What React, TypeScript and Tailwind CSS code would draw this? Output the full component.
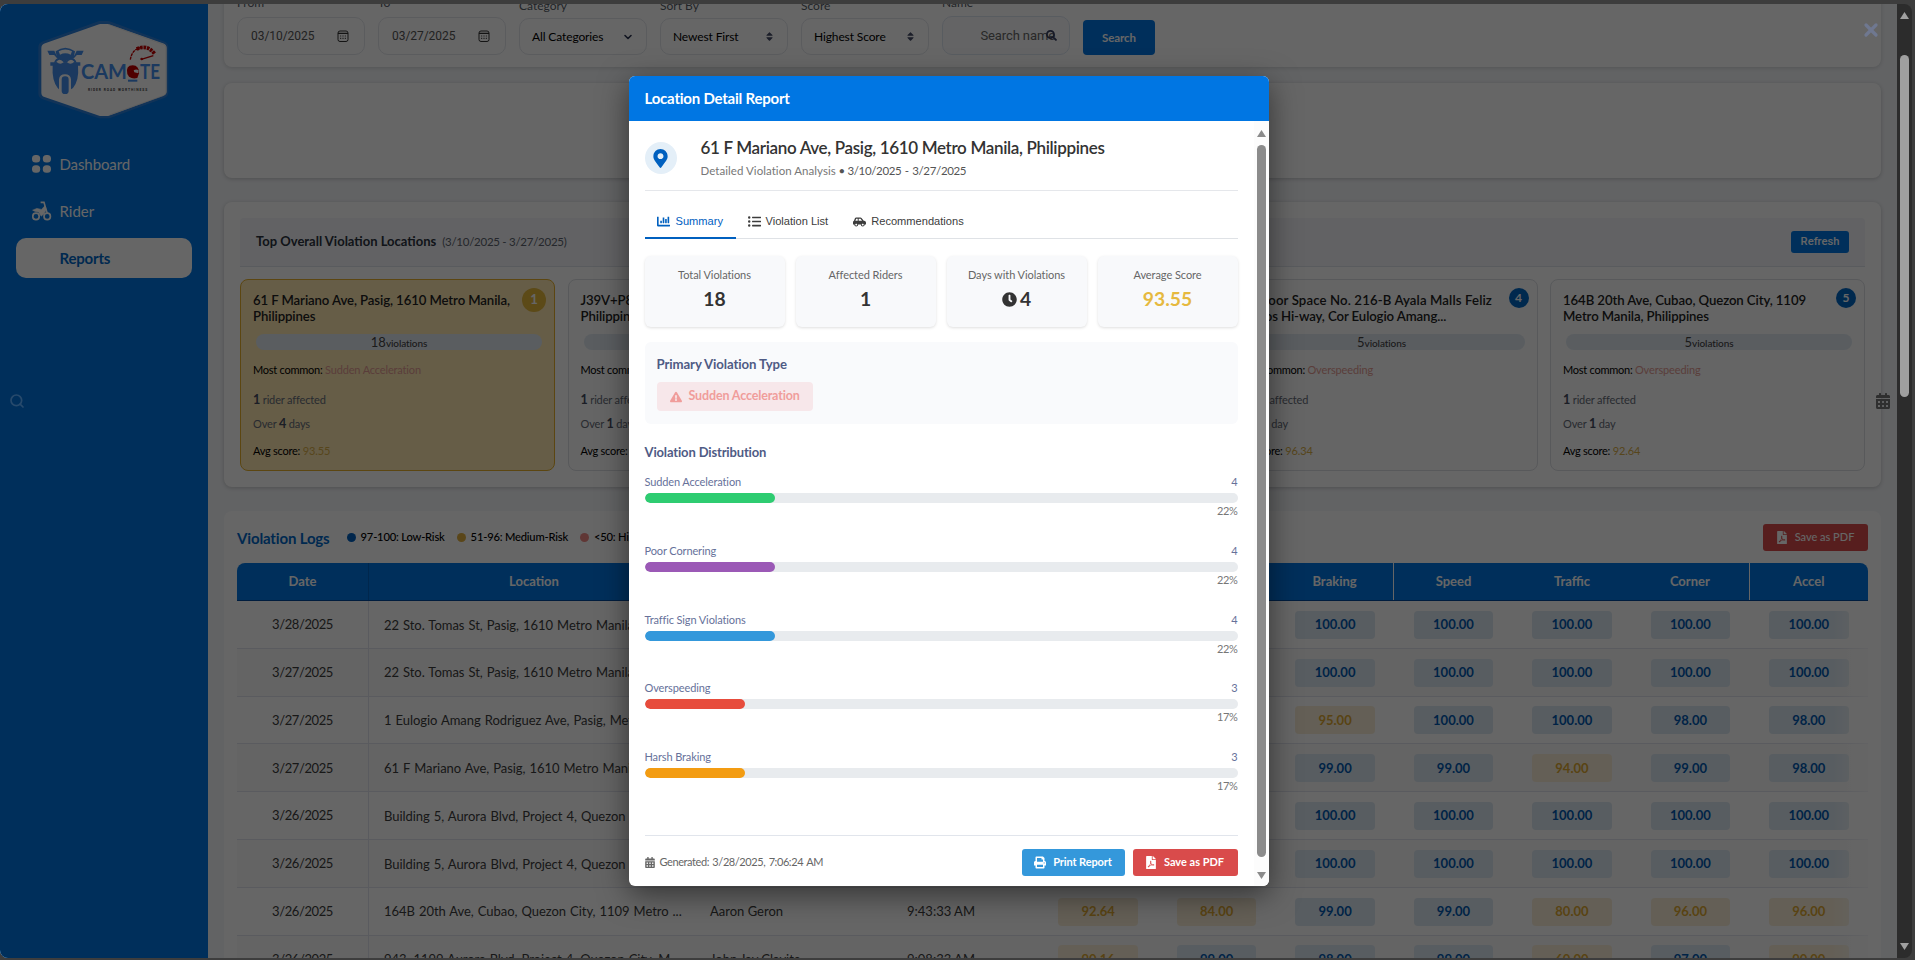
import React from "react";
import {
  FaCalendarAlt,
  FaCarSide,
  FaChartBar,
  FaClock,
  FaExclamationTriangle,
  FaFilePdf,
  FaListUl,
  FaMapMarkerAlt,
  FaPrint,
  FaSearch,
  FaSort,
} from "react-icons/fa";
import { ChevronDown, Search, X } from "lucide-react";

function Logo() {
  return (
    <svg viewBox="0 0 450 360" className="h-[120px] w-[150px]">
      <polygon
        points="44,112 210,52 234,52 396,112 396,246 234,306 210,306 44,250"
        fill="#2c80dc"
        stroke="#2c80dc"
        strokeWidth="38"
        strokeLinejoin="round"
      />
      <polygon
        points="48,114 212,56 232,56 396,114 396,244 232,304 212,304 48,248"
        fill="#fff"
        stroke="#fff"
        strokeWidth="28"
        strokeLinejoin="round"
      />
      <path d="M236 44 L402 104 Q408 106 408 114 V246 Q408 252 402 256 L240 314" fill="none" stroke="#e4e4e4" strokeWidth="2" />
      <g fill="#4490ee">
        <path d="M52 122 h21 l6 13 h-21 z M161 122 h-21 l-6 13 h21 z" />
        <path d="M70 129 l14 15 M143 129 l-14 15" stroke="#4490ee" strokeWidth="5" />
        <path d="M77 124 Q106 102 135 124 L131 144 L106 154 L81 144 Z" />
        <path d="M61 157 h90 v10 h-7 Q148 210 129 234 L123 238 V208 Q121 193 105 193 Q89 193 87 208 V238 L83 234 Q65 210 68 167 h-7 z" />
        <path d="M72 158 Q76 144 88 143 L106 153 L124 143 Q136 144 140 158 Z" />
        <rect x="95" y="199" width="21" height="53" rx="10" />
      </g>
      <path d="M86 124 Q106 113 126 124 L122 134 Q106 126 90 134 Z" fill="#fff" />
      <path d="M79 155 Q90 143 101 157 Q90 166 79 155 Z M133 155 Q122 143 111 157 Q122 166 133 155 Z" fill="#fff" />
      <text x="153" y="208" fontFamily="Lato, sans-serif" fontWeight="700" fontSize="61" textLength="138" lengthAdjust="spacingAndGlyphs" fill="#4490ee">CAM</text>
      <text x="330" y="208" fontFamily="Lato, sans-serif" fontWeight="700" fontSize="61" textLength="60" lengthAdjust="spacingAndGlyphs" fill="#4490ee">TE</text>
      <rect x="294" y="209" width="28" height="6" fill="#4490ee" />
      <path d="M292 192 Q286 166 308 166 Q328 167 327 190 L322 204 Q308 208 297 200 Z" fill="#c60000" />
      <path d="M311 181 Q319 176 326 181 L325 190 L313 187 Z" fill="#fff" />
      <path d="M301 149 Q306 116 337 112" fill="none" stroke="#c60000" strokeWidth="4" strokeDasharray="9 2" />
      <path d="M320 117 Q352 102 374 132" fill="none" stroke="#c60000" strokeWidth="11" strokeDasharray="8 2.5" />
      <path d="M334 148 L370 137" stroke="#c60000" strokeWidth="4" />
      <circle cx="335" cy="147" r="4" fill="#c60000" />
      <text x="174" y="242" fontFamily="Roboto, sans-serif" fontWeight="700" fontSize="10" textLength="178" fill="#444">RIDER ROAD WORTHINESS</text>
    </svg>
  );
}

function DotsIcon() {
  return (
    <svg viewBox="0 0 20 20" className="h-5 w-5" fill="#fff">
      <rect x="0" y="1" width="8.2" height="7.6" rx="3.6" />
      <rect x="10.8" y="1" width="8.2" height="7.6" rx="3.6" />
      <rect x="0" y="11.2" width="8.2" height="7.6" rx="3.6" />
      <rect x="10.8" y="11.2" width="8.2" height="7.6" rx="3.6" />
    </svg>
  );
}

function BikeIcon() {
  return (
    <svg viewBox="0 0 20 20" className="h-5 w-5" fill="none" stroke="#fff">
      <circle cx="4" cy="15.4" r="3.2" strokeWidth="1.7" />
      <circle cx="15.2" cy="15.4" r="3.2" strokeWidth="1.7" />
      <path d="M8.6 1.4h3.4l1.8 6.4 1.6 5" strokeWidth="1.6" />
      <path d="M0.6 9.2 4.8 7.4l4.6 1 3.6-3.6 1.4 3.4-2.2 4.4-3 2.6-2.6-4.2-3.4-.6z" fill="#fff" strokeWidth="0.6" />
    </svg>
  );
}

function DateIcon() {
  return (
    <svg viewBox="0 0 12 12" className="h-3 w-3" fill="none" stroke="#333" strokeWidth="1">
      <rect x="1" y="1" width="10" height="10.5" rx="2" />
      <path d="M1 3.4h10" strokeWidth="1.2" />
      <path d="M3.2 6h1M5.5 6h1M7.8 6h1M3.2 8.4h1M5.5 8.4h1M7.8 8.4h1" strokeWidth="1.1" />
    </svg>
  );
}

function Sidebar() {
  return (
    <aside className="flex w-[208px] shrink-0 flex-col bg-[#0076e3]">
      <div className="mt-[6px] flex justify-center pl-[2px]">
        <Logo />
      </div>
      <nav className="mt-[14px] flex flex-col gap-[7px] px-4 text-[15px] text-white">
        <a className="flex h-10 items-center gap-2 pl-[15.5px] tracking-[-0.1px]"><DotsIcon />Dashboard</a>
        <a className="flex h-10 items-center gap-2 pl-[15.5px]"><BikeIcon />Rider</a>
        <a className="flex h-10 items-center rounded-[10px] bg-white pl-[43.5px] font-bold tracking-[-0.2px] text-[#0068c8]">Reports</a>
      </nav>
    </aside>
  );
}

function Field({ label, children }: { label: string; children: React.ReactNode }) {
  return (
    <div className="flex w-32 flex-col">
      <span className="h-[18px] text-[12px] leading-[18px] text-[#555b66]">{label}</span>
      {children}
    </div>
  );
}

function DateField({ label, value }: { label: string; value: string }) {
  return (
    <Field label={label}>
      <div className="mt-[5px] flex h-[38px] items-center justify-between rounded-[10px] border border-[#e3e6ec] pb-px pl-[13px] pr-[15px] font-['Roboto'] text-[12px] tracking-[-0.05px] text-[#555]">
        {value}
        <DateIcon />
      </div>
    </Field>
  );
}

function SelectField({ label, value, sort }: { label: string; value: string; sort?: boolean }) {
  return (
    <Field label={label}>
      <div className="mt-[3px] flex h-[37px] items-center justify-between rounded-[10px] border border-[#e3e6ec] pl-3 pr-3 text-[12px] tracking-[-0.12px] text-black">
        {value}
        {sort ? <FaSort className="mr-[1px] h-[11px] w-[9px] text-[#444b66]" /> : <ChevronDown className="h-[12px] w-[12px] text-[#2b3350]" strokeWidth={3.2} />}
      </div>
    </Field>
  );
}

function Filters() {
  return (
    <section className="-mt-5 flex h-[83px] items-end gap-[13px] rounded-lg bg-white px-[13px] pb-3 shadow-[0_1px_4px_rgba(0,0,0,0.15)]">
      <DateField label="From" value="03/10/2025" />
      <DateField label="To" value="03/27/2025" />
      <SelectField label="Category" value="All Categories" />
      <SelectField label="Sort By" value="Newest First" sort />
      <SelectField label="Score" value="Highest Score" sort />
      <Field label="Name">
        <div className="mt-[4px] flex h-[39px] items-center justify-end rounded-[10px] border border-[#dde5f0] bg-[#fafbfd] pr-[12px] font-['Roboto'] text-[13px] text-[#666]">
          <span className="-mr-[9px] tracking-[-0.1px]">Search name</span>
          <FaSearch className="h-[11px] w-[11px] text-[#3a4262]" />
        </div>
      </Field>
      <button className="h-[35px] w-[72px] rounded bg-[#0076e3] text-[11.5px] font-bold tracking-[-0.1px] text-white">Search</button>
    </section>
  );
}

type Loc = { title: [string, string]; rank: number; count: number; type: string; days: string; score: string };
const locations: Loc[] = [
  { title: ["61 F Mariano Ave, Pasig, 1610 Metro Manila,", "Philippines"], rank: 1, count: 18, type: "Sudden Acceleration", days: "4 days", score: "93.55" },
  { title: ["J39V+P8F, Pasig, 1610 Metro Manila,", "Philippines"], rank: 2, count: 9, type: "Overspeeding", days: "1 day", score: "95.20" },
  { title: ["22 Sto. Tomas St, Pasig, 1610 Metro", "Manila, Philippines"], rank: 3, count: 6, type: "Overspeeding", days: "1 day", score: "97.10" },
  { title: ["1st Floor Space No. 216-B Ayala Malls Feliz", "Marcos Hi-way, Cor Eulogio Amang..."], rank: 4, count: 5, type: "Overspeeding", days: "1 day", score: "96.34" },
  { title: ["164B 20th Ave, Cubao, Quezon City, 1109", "Metro Manila, Philippines"], rank: 5, count: 5, type: "Overspeeding", days: "1 day", score: "92.64" },
];

function LocationCard({ loc }: { loc: Loc }) {
  const top = loc.rank === 1;
  const [n, unit] = loc.days.split(" ");
  return (
    <article className={`flex h-[192px] flex-col rounded-lg border pl-3 pr-2 pt-2 ${top ? "border-[#e5b02c] bg-[#ffe8b2]" : "border-[#dcdfe4] bg-[#fcfcfc]"}`}>
      <div className="flex h-[46px] justify-between">
        <h3 className="whitespace-nowrap pt-[4px] text-[13.2px] font-semibold leading-4 tracking-[-0.1px] text-[#222]">
          <span className={loc.rank === 4 ? "tracking-[0.12px]" : ""}>{loc.title[0]}</span>
          <br />
          {loc.title[1]}
        </h3>
        {top ? (
          <span className="flex h-6 w-6 shrink-0 items-center justify-center rounded-full bg-[#e5b83b] text-[13px] font-bold text-white">1</span>
        ) : (
          <span className="flex h-5 w-5 shrink-0 items-center justify-center rounded-full bg-[#0066c4] text-[12px] font-bold text-white">{loc.rank}</span>
        )}
      </div>
      <div className="ml-[3px] mr-1 flex h-4 items-baseline justify-center rounded-full bg-[#e0e9f1] leading-4 text-[#444]">
        <span className="text-[13px] leading-4">{loc.count}</span>
        <span className="text-[10px] font-medium leading-4 tracking-[-0.1px]">violations</span>
      </div>
      <p className="mt-[12px] text-[11px] leading-4 tracking-[-0.25px] text-black">
        Most common: <span className="tracking-[-0.15px] text-[#e29a92]">{loc.type}</span>
      </p>
      <p className="mt-[14px] text-[11px] leading-4 tracking-[-0.15px] text-[#666c78]"><b className="text-[12.5px] text-[#444b60]">1</b> rider affected</p>
      <p className="mt-2 text-[11px] leading-4 tracking-[-0.15px] text-[#666c78]">Over <b className="text-[12.5px] text-[#444b60]">{n}</b> {unit}</p>
      <p className="mt-[11px] text-[11px] leading-4 tracking-[-0.25px] text-black">Avg score: <span className="tracking-[-0.1px] text-[#d9ae48]">{loc.score}</span></p>
    </article>
  );
}

function TopLocations() {
  return (
    <section className="mt-6 h-[285px] rounded-lg bg-white p-4 shadow-[0_1px_4px_rgba(0,0,0,0.2)]">
      <header className="flex h-[49px] items-center rounded-t border-b border-[#dfe4ea] bg-[#f4f6f9] pl-4 pr-4">
        <h2 className="text-[13px] font-bold text-[#2c3340]">Top Overall Violation Locations</h2>
        <span className="ml-[6px] text-[11.5px] tracking-[-0.27px] text-[#5c636e]">(3/10/2025 - 3/27/2025)</span>
        <button className="ml-auto h-[22px] w-[58px] rounded-[3px] bg-[#0076e3] font-['Roboto'] text-[11.2px] font-medium text-white">Refresh</button>
      </header>
      <div className="mt-3 grid grid-cols-5 gap-[12.5px]">
        {locations.map((l) => (
          <LocationCard key={l.rank} loc={l} />
        ))}
      </div>
    </section>
  );
}

type Row = [string, string, string, string, string[]];
const all = "100.00";
const rows: Row[] = [
  ["3/28/2025", "22 Sto. Tomas St, Pasig, 1610 Metro Manila...", "Aaron Geron", "6:41:10 AM", [all, all, all, all, all, all, all]],
  ["3/27/2025", "22 Sto. Tomas St, Pasig, 1610 Metro Manila...", "Aaron Geron", "9:12:45 PM", [all, all, all, all, all, all, all]],
  ["3/27/2025", "1 Eulogio Amang Rodriguez Ave, Pasig, Metro ...", "Aaron Geron", "8:50:02 PM", ["98.60", all, "95.00", all, all, "98.00", "98.00"]],
  ["3/27/2025", "61 F Mariano Ave, Pasig, 1610 Metro Manila...", "Aaron Geron", "7:32:51 PM", ["97.80", all, "99.00", "99.00", "94.00", "99.00", "98.00"]],
  ["3/26/2025", "Building 5, Aurora Blvd, Project 4, Quezon City ...", "Aaron Geron", "5:20:18 PM", [all, all, all, all, all, all, all]],
  ["3/26/2025", "Building 5, Aurora Blvd, Project 4, Quezon City ...", "Aaron Geron", "5:02:40 PM", [all, all, all, all, all, all, all]],
  ["3/26/2025", "164B 20th Ave, Cubao, Quezon City, 1109 Metro ...", "Aaron Geron", "9:43:33 AM", ["92.64", "84.00", "99.00", "99.00", "80.00", "96.00", "96.00"]],
  ["3/26/2025", "943, 1199 Aurora Blvd, Project 4, Quezon City, M...", "John Jay Clavite", "9:08:33 AM", ["90.16", "99.00", "98.00", "99.00", "60.00", "97.00", "90.00"]],
];
const heads = ["Date", "Location", "Rider", "Time", "Score", "Overall", "Braking", "Speed", "Traffic", "Corner", "Accel"];
const cols = "grid grid-cols-[132px_330px_144px_196px_repeat(7,minmax(0,1fr))]";

function Pill({ v }: { v: string }) {
  const low = parseFloat(v) >= 97;
  return (
    <span className={`flex h-7 w-[79.5px] items-center justify-center rounded text-[13px] font-bold ${low ? "bg-[#dce8f2] text-[#0058b0]" : "bg-[#f9eed8] text-[#dea830]"}`}>
      {v}
    </span>
  );
}

function Legend({ color, text }: { color: string; text: string }) {
  return (
    <span className="flex items-center gap-[5px] text-[11.2px] font-medium tracking-[-0.2px] text-black">
      <i className={`h-[9px] w-[9px] rounded-full ${color}`} />
      {text}
    </span>
  );
}

function Logs() {
  return (
    <section className="mt-6 h-[500px] rounded-lg bg-white px-[13px] pt-[13px]">
      <div className="flex h-[27px] items-center">
        <h2 className="pt-px text-[15px] font-bold tracking-[-0.15px] text-[#0068c8]">Violation Logs</h2>
        <div className="ml-[17px] flex gap-3">
          <Legend color="bg-[#0060bf]" text="97-100: Low-Risk" />
          <Legend color="bg-[#e0b040]" text="51-96: Medium-Risk" />
          <Legend color="bg-[#ef8a86]" text="<50: High-Risk" />
        </div>
        <button className="ml-auto flex h-[27px] w-[105px] items-center justify-center gap-2 rounded-[3px] bg-[#d94b4b] text-[11px] font-medium text-white">
          <FaFilePdf className="h-[13px] w-[10px]" />
          Save as PDF
        </button>
      </div>
      <div className="relative mt-3 overflow-hidden rounded-t-lg">
        <div className={`${cols} h-[38px] border-b border-[#004a9c] bg-[#0076e3] text-[13px] font-bold text-white`}>
          {heads.map((h, i) => (
            <div key={h} className={`flex items-center justify-center ${i === 0 ? "border-r border-[#0062c0]" : ""} ${i === 6 || i === 9 ? "border-r border-white" : ""}`}>
              {h}
            </div>
          ))}
        </div>
        {rows.map(([d, l, r, t, s], i) => (
          <div key={i} className={`${cols} h-[47.8px] border-b border-[#e1e3ee] text-[13px] text-[#3c3c3c] ${i % 2 ? "bg-[#fafafa]" : "bg-white"}`}>
            <div className="flex items-center justify-center border-r border-[#e1e3ee] pt-px tracking-[-0.4px]">{d}</div>
            <div className="flex items-center whitespace-nowrap pl-[15px] pt-[2px] tracking-[-0.05px] [word-spacing:0.8px]">{l}</div>
            <div className="flex items-center whitespace-nowrap pl-[11px] pt-[2px]">{r}</div>
            <div className="flex items-center justify-center pt-[2px]">{t}</div>
            {s.map((v, j) => (
              <div key={j} className="flex items-center justify-center pt-px">
                <Pill v={v} />
              </div>
            ))}
          </div>
        ))}
        <div className="absolute bottom-0 right-0 top-[38px] w-9 bg-gradient-to-r from-transparent to-white/70" />
      </div>
    </section>
  );
}

function Stat({ label, value, gold, clock }: { label: string; value: string; gold?: boolean; clock?: boolean }) {
  return (
    <div className="flex h-[71px] flex-col items-center rounded-md bg-[#f8f9fb] pt-[11px] shadow-[0_1px_3px_rgba(0,0,0,0.13)]">
      <span className="text-[11px] leading-4 tracking-[-0.06px] text-[#666]">{label}</span>
      <span className={`mt-[4px] flex items-center gap-[3px] text-[19.3px] font-bold leading-6 ${gold ? "text-[#e6b93f]" : "text-[#333]"}`}>
        {clock && <FaClock className="h-[15px] w-[15px]" />}
        {value}
      </span>
    </div>
  );
}

const dist = [
  { name: "Sudden Acceleration", n: 4, pct: 22, color: "bg-[#2ecc71]" },
  { name: "Poor Cornering", n: 4, pct: 22, color: "bg-[#9b59b6]" },
  { name: "Traffic Sign Violations", n: 4, pct: 22, color: "bg-[#3498db]" },
  { name: "Overspeeding", n: 3, pct: 17, color: "bg-[#e74c3c]" },
  { name: "Harsh Braking", n: 3, pct: 17, color: "bg-[#f39c12]" },
];

function Modal() {
  return (
    <div className="flex h-[810px] w-[640px] flex-col overflow-hidden rounded-md bg-white shadow-[0_8px_30px_rgba(0,0,0,0.5)]">
      <header className="flex h-[45px] shrink-0 items-center bg-[#0076e3] px-4 text-[15px] font-bold tracking-[-0.22px] text-white">Location Detail Report</header>
      <div className="flex min-h-0 flex-1">
        <div className="flex w-[625px] flex-col pl-4 pr-4">
          <div className="flex h-[70px] shrink-0 border-b border-[#e5e7eb]">
            <span className="mt-[21px] flex h-8 w-8 items-center justify-center rounded-full bg-[#e4eff8]">
              <FaMapMarkerAlt className="h-[19px] w-[15px] text-[#0060bf]" />
            </span>
            <div className="ml-6 mt-4 whitespace-nowrap">
              <h2 className="text-[17px] font-semibold leading-[22px] tracking-[-0.34px] text-[#333]">61 F Mariano Ave, Pasig, 1610 Metro Manila, Philippines</h2>
              <p className="mt-[4px] text-[11.5px] leading-4 tracking-[-0.34px] text-[#555]">
                <span className="tracking-[0.05px] text-[#777]">Detailed Violation Analysis</span> • <span className="[word-spacing:0.8px]">3/10/2025 - 3/27/2025</span>
              </p>
            </div>
          </div>
          <div className="mt-3 flex h-[36px] shrink-0 items-stretch border-b border-[#dfe2e6] font-['Liberation_Sans',sans-serif] text-[11.1px] text-[#3c3c3c]">
            <button className="-mb-px flex w-[91px] items-center gap-[6px] border-b-2 border-[#0060bf] pl-3 pt-[3px] text-[#0060bf]">
              <FaChartBar className="h-[13px] w-[13px]" />
              Summary
            </button>
            <button className="flex items-center gap-[5px] pl-3 pt-[2px]">
              <FaListUl className="h-[13px] w-[13px]" />
              Violation List
            </button>
            <button className="ml-[13px] flex items-center gap-[5px] pl-3 pt-[2px]">
              <FaCarSide className="h-[12px] w-[13px]" />
              Recommendations
            </button>
          </div>
          <div className="mt-[17px] grid shrink-0 grid-cols-4 gap-[11px]">
            <Stat label="Total Violations" value="18" />
            <Stat label="Affected Riders" value="1" />
            <Stat label="Days with Violations" value="4" clock />
            <Stat label="Average Score" value="93.55" gold />
          </div>
          <div className="mt-[15px] flex h-[82px] shrink-0 flex-col items-start rounded-md bg-[#f9fafc] px-3 pt-3">
            <h3 className="text-[13.2px] font-bold leading-5 tracking-[-0.1px] text-[#4f5b85]">Primary Violation Type</h3>
            <span className="mt-[8px] flex h-[29px] w-[156px] items-center gap-[7px] rounded bg-[#f7e7ea] pl-[13px] text-[12.5px] font-bold tracking-[-0.15px] text-[#f09d9b]">
              <FaExclamationTriangle className="h-[12px] w-[12px]" />
              Sudden Acceleration
            </span>
          </div>
          <h3 className="mt-[18px] text-[13px] font-bold leading-5 tracking-[-0.15px] text-[#4f5b85]">Violation Distribution</h3>
          <div className="mt-3 flex flex-col">
            {dist.map((d) => (
              <div key={d.name} className="flex h-[68.75px] flex-col">
                <div className="flex justify-between text-[11px] leading-4 tracking-[-0.12px] text-[#66719a]">
                  <span>{d.name}</span>
                  <span>{d.n}</span>
                </div>
                <div className="mt-[3px] h-[10px] shrink-0 overflow-hidden rounded-full bg-[#e8ebee]">
                  <div className={`h-full rounded-full ${d.color}`} style={{ width: `${d.pct}%` }} />
                </div>
                <span className="text-right text-[11px] leading-4 tracking-[-0.4px] text-[#777]">{d.pct}%</span>
              </div>
            ))}
          </div>
          <footer className="mt-[17px] flex shrink-0 items-start border-t border-[#e1e5ec] pt-[13px]">
            <span className="flex h-[27px] items-center gap-[5px] text-[11px] tracking-[-0.42px] text-[#666] [word-spacing:1px]">
              <FaCalendarAlt className="h-[11px] w-[10px]" />
              Generated: 3/28/2025, 7:06:24 AM
            </span>
            <button className="ml-auto flex h-[27px] w-[103px] items-center justify-center gap-[7px] rounded-[3px] bg-[#3498db] text-[11px] font-bold tracking-[-0.1px] text-white">
              <FaPrint className="h-[13px] w-[12px]" />
              Print Report
            </button>
            <button className="ml-2 flex h-[27px] w-[105px] items-center justify-center gap-2 rounded-[3px] bg-[#d94b4b] text-[11px] font-bold text-white">
              <FaFilePdf className="h-[13px] w-[10px]" />
              Save as PDF
            </button>
          </footer>
        </div>
        <div className="flex w-[15px] flex-col items-center bg-[#fcfcfc] pb-[7px] pt-[9px]">
          <svg viewBox="0 0 9 7" className="h-[7px] w-[9px] shrink-0" fill="#8b8b8b"><path d="M4.5 0 9 7H0z" /></svg>
          <div className="mt-2 h-[712px] w-[9px] shrink-0 rounded-full bg-[#8b8b8b]" />
          <svg viewBox="0 0 9 7" className="mt-auto h-[7px] w-[9px] shrink-0" fill="#8b8b8b"><path d="M4.5 7 9 0H0z" /></svg>
        </div>
      </div>
    </div>
  );
}

export default function App() {
  return (
    <div className="flex h-[960px] w-[1915px] overflow-hidden bg-[#3d3d3d] pb-[2px] pt-1 font-['Lato',sans-serif]">
      <div className="relative flex w-[1897px] shrink-0 overflow-hidden rounded-l-lg bg-[#f5f7fa]">
        <Sidebar />
        <main className="min-w-0 flex-1 overflow-hidden px-4">
          <Filters />
          <section className="mt-4 h-[95px] rounded-lg bg-white shadow-[0_1px_4px_rgba(0,0,0,0.2)]" />
          <TopLocations />
          <Logs />
        </main>
        <FaCalendarAlt className="absolute left-[1876px] top-[389px] h-4 w-[14px] text-[#777]" />
        <div className="absolute inset-0 flex items-center justify-center bg-black/60">
          <Modal />
          <X className="absolute left-[1861px] top-[16px] h-5 w-5 text-[#6f7890]" strokeWidth={4} />
          <Search className="absolute left-[9px] top-[389px] h-[16px] w-[16px] text-[#274a6c]" strokeWidth={2.6} />
        </div>
      </div>
      <div className="flex w-[15px] flex-col items-center rounded-r-lg bg-[#2c2c2c] pb-2 pt-2">
        <svg viewBox="0 0 9 7" className="h-[7px] w-[9px] shrink-0" fill="#a0a0a0"><path d="M4.5 0 9 7H0z" /></svg>
        <div className="mt-9 h-[342px] w-[9px] shrink-0 rounded-full bg-[#9f9f9f]" />
        <svg viewBox="0 0 9 7" className="mt-auto h-[7px] w-[9px] shrink-0" fill="#a0a0a0"><path d="M4.5 7 9 0H0z" /></svg>
      </div>
    </div>
  );
}
